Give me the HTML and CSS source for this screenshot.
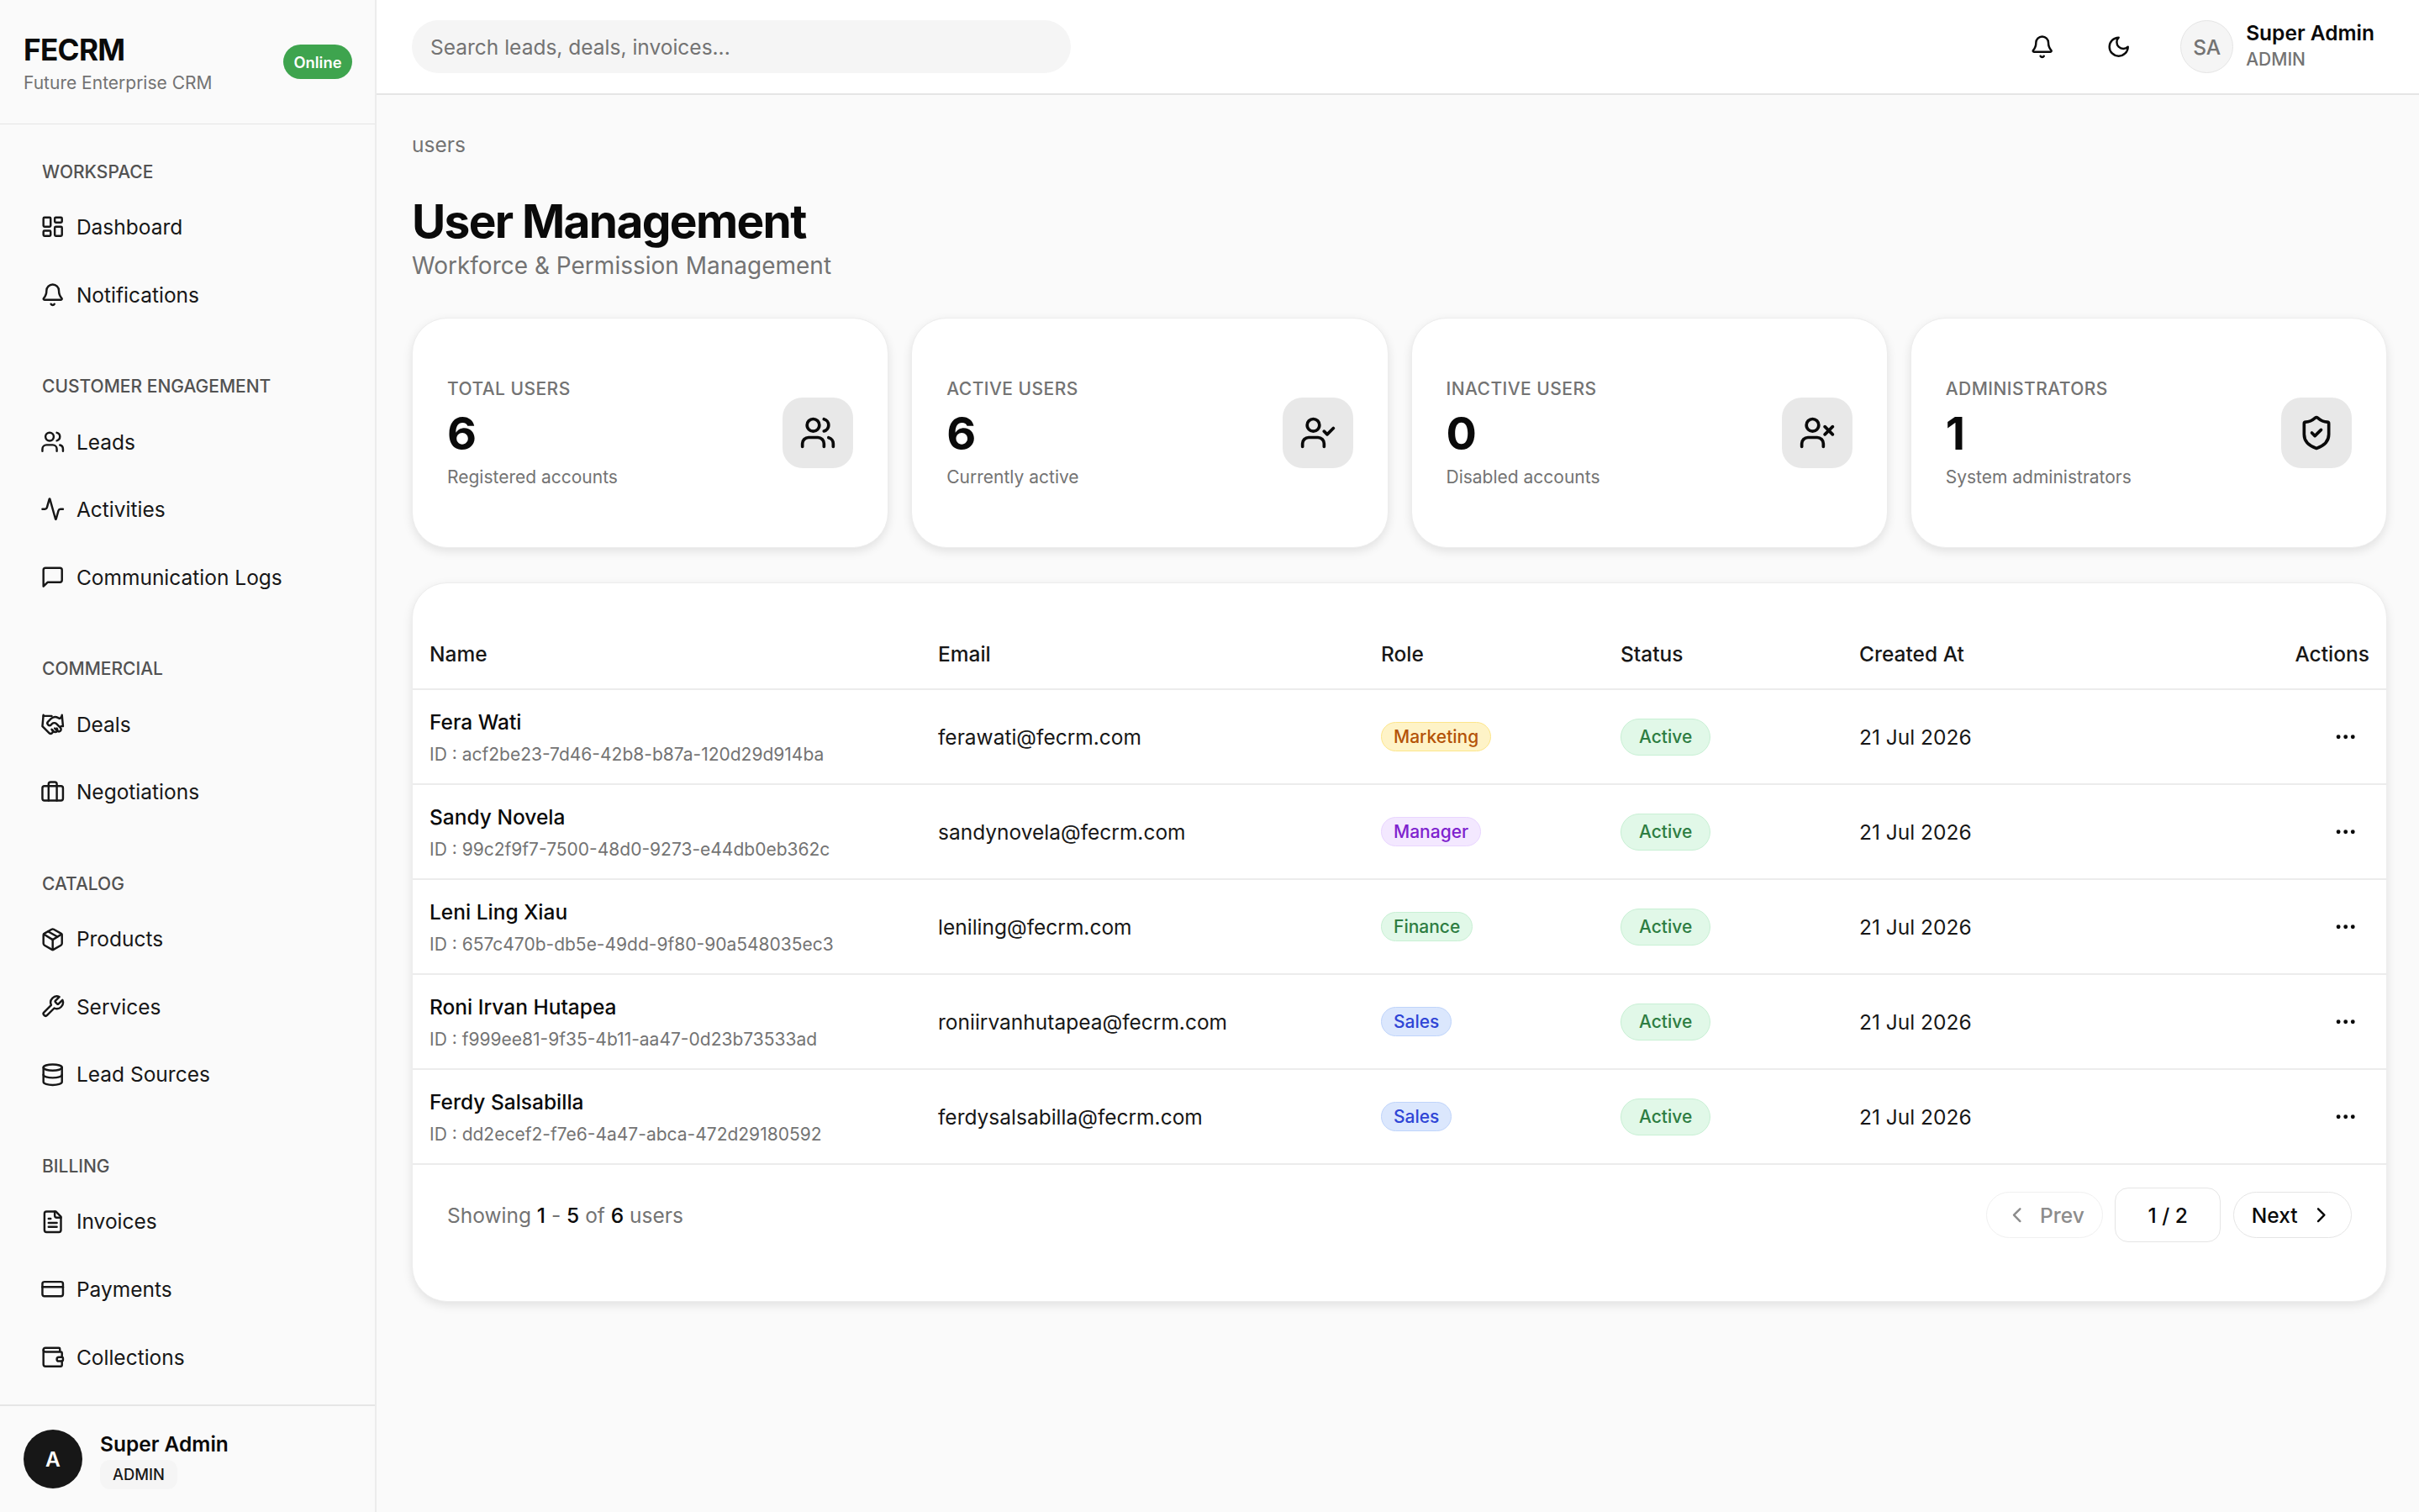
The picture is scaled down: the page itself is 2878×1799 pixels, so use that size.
FILE: index.html
```html
<!doctype html>
<html lang="en">
 <head>
  <meta charset="UTF-8">
  <meta name="viewport" content="width=device-width, initial-scale=1.0">
  <title>User Management - FECRM</title>
  <link rel="stylesheet" href="styles.css">
 </head>
 <body>
  <svg class="sprite" xmlns="http://www.w3.org/2000/svg">
   <symbol id="i-dashboard" viewBox="0 0 24 24"><rect x="3" y="3" width="7" height="9" rx="1"/><rect x="14" y="3" width="7" height="5" rx="1"/><rect x="14" y="12" width="7" height="9" rx="1"/><rect x="3" y="16" width="7" height="5" rx="1"/></symbol>
   <symbol id="i-bell" viewBox="0 0 24 24"><path d="M10.268 21a2 2 0 0 0 3.464 0"/><path d="M3.262 15.326A1 1 0 0 0 4 17h16a1 1 0 0 0 .74-1.673C19.41 13.956 18 12.499 18 8A6 6 0 0 0 6 8c0 4.499-1.411 5.956-2.738 7.326"/></symbol>
   <symbol id="i-users" viewBox="0 0 24 24"><path d="M16 21v-2a4 4 0 0 0-4-4H6a4 4 0 0 0-4 4v2"/><circle cx="9" cy="7" r="4"/><path d="M22 21v-2a4 4 0 0 0-3-3.87"/><path d="M16 3.13a4 4 0 0 1 0 7.75"/></symbol>
   <symbol id="i-activity" viewBox="0 0 24 24"><path d="M22 12h-2.48a2 2 0 0 0-1.93 1.46l-2.35 8.36a.25.25 0 0 1-.48 0L9.24 2.18a.25.25 0 0 0-.48 0l-2.35 8.36A2 2 0 0 1 4.49 12H2"/></symbol>
   <symbol id="i-message" viewBox="0 0 24 24"><path d="M21 15a2 2 0 0 1-2 2H7l-4 4V5a2 2 0 0 1 2-2h14a2 2 0 0 1 2 2z"/></symbol>
   <symbol id="i-handshake" viewBox="0 0 24 24"><path d="m11 17 2 2a1 1 0 1 0 3-3"/><path d="m14 16 2.5 2.5a1 1 0 1 0 3-3l-3.88-3.88a3 3 0 0 0-4.24 0l-.88.88a1 1 0 1 1-3-3l2.81-2.81a5.79 5.79 0 0 1 7.06-.87l.47.28a2 2 0 0 0 1.42.25L21 4"/><path d="m21 3 1 11h-2"/><path d="M3 3 2 14l6.5 6.5a1 1 0 1 0 3-3"/><path d="M3 4h8"/></symbol>
   <symbol id="i-briefcase" viewBox="0 0 24 24"><path d="M16 20V4a2 2 0 0 0-2-2h-4a2 2 0 0 0-2 2v16"/><rect x="2" y="6" width="20" height="14" rx="2"/></symbol>
   <symbol id="i-package" viewBox="0 0 24 24"><path d="M11 21.73a2 2 0 0 0 2 0l7-4A2 2 0 0 0 21 16V8a2 2 0 0 0-1-1.73l-7-4a2 2 0 0 0-2 0l-7 4A2 2 0 0 0 3 8v8a2 2 0 0 0 1 1.73z"/><path d="M12 22V12"/><path d="m3.3 7 7.703 4.734a2 2 0 0 0 1.994 0L20.7 7"/><path d="m7.5 4.27 9 5.15"/></symbol>
   <symbol id="i-wrench" viewBox="0 0 24 24"><path d="M14.7 6.3a1 1 0 0 0 0 1.4l1.6 1.6a1 1 0 0 0 1.4 0l3.77-3.77a6 6 0 0 1-7.94 7.94l-6.91 6.91a2.12 2.12 0 0 1-3-3l6.91-6.91a6 6 0 0 1 7.94-7.94l-3.76 3.76z"/></symbol>
   <symbol id="i-database" viewBox="0 0 24 24"><ellipse cx="12" cy="5" rx="9" ry="3"/><path d="M3 5V19A9 3 0 0 0 21 19V5"/><path d="M3 12A9 3 0 0 0 21 12"/></symbol>
   <symbol id="i-file" viewBox="0 0 24 24"><path d="M15 2H6a2 2 0 0 0-2 2v16a2 2 0 0 0 2 2h12a2 2 0 0 0 2-2V7Z"/><path d="M14 2v4a2 2 0 0 0 2 2h4"/><path d="M10 9H8"/><path d="M16 13H8"/><path d="M16 17H8"/></symbol>
   <symbol id="i-card" viewBox="0 0 24 24"><rect x="2" y="5" width="20" height="14" rx="2"/><path d="M2 10h20"/></symbol>
   <symbol id="i-wallet" viewBox="0 0 24 24"><path d="M19 7V4a1 1 0 0 0-1-1H5a2 2 0 0 0 0 4h15a1 1 0 0 1 1 1v4h-3a2 2 0 0 0 0 4h3a1 1 0 0 0 1-1v-2a1 1 0 0 0-1-1"/><path d="M3 5v14a2 2 0 0 0 2 2h15a1 1 0 0 0 1-1v-4"/></symbol>
   <symbol id="i-moon" viewBox="0 0 24 24"><path d="M12 3a6 6 0 0 0 9 9 9 9 0 1 1-9-9Z"/></symbol>
   <symbol id="i-user-check" viewBox="0 0 24 24"><path d="M16 21v-2a4 4 0 0 0-4-4H6a4 4 0 0 0-4 4v2"/><circle cx="9" cy="7" r="4"/><path d="m16 11 2 2 4-4"/></symbol>
   <symbol id="i-user-x" viewBox="0 0 24 24"><path d="M16 21v-2a4 4 0 0 0-4-4H6a4 4 0 0 0-4 4v2"/><circle cx="9" cy="7" r="4"/><path d="m17 8 5 5"/><path d="m22 8-5 5"/></symbol>
   <symbol id="i-shield" viewBox="0 0 24 24"><path d="M20 13c0 5-3.5 7.5-7.66 8.95a1 1 0 0 1-.67-.01C7.5 20.5 4 18 4 13V6a1 1 0 0 1 1-1c2 0 4.5-1.2 6.24-2.72a1.17 1.17 0 0 1 1.52 0C14.51 3.81 17 5 19 5a1 1 0 0 1 1 1z"/><path d="m9 12 2 2 4-4"/></symbol>
   <symbol id="i-dots" viewBox="0 0 24 24"><circle cx="12" cy="12" r="1"/><circle cx="19" cy="12" r="1"/><circle cx="5" cy="12" r="1"/></symbol>
   <symbol id="i-left" viewBox="0 0 24 24"><path d="m15 18-6-6 6-6"/></symbol>
   <symbol id="i-right" viewBox="0 0 24 24"><path d="m9 18 6-6-6-6"/></symbol>
  </svg>

  <div class="layout">
   <!-- Sidebar -->
   <aside class="sidebar">
    <div class="brand">
     <div>
      <div class="brand-name">FECRM</div>
      <div class="brand-sub">Future Enterprise CRM</div>
     </div>
     <span class="online">Online</span>
    </div>

    <nav class="nav">
     <div class="nav-section">
      <div class="nav-label">WORKSPACE</div>
      <a class="nav-item"><svg class="icon"><use href="#i-dashboard"/></svg>Dashboard</a>
      <a class="nav-item"><svg class="icon"><use href="#i-bell"/></svg>Notifications</a>
     </div>
     <div class="nav-section">
      <div class="nav-label">CUSTOMER ENGAGEMENT</div>
      <a class="nav-item"><svg class="icon"><use href="#i-users"/></svg>Leads</a>
      <a class="nav-item"><svg class="icon"><use href="#i-activity"/></svg>Activities</a>
      <a class="nav-item"><svg class="icon"><use href="#i-message"/></svg>Communication Logs</a>
     </div>
     <div class="nav-section">
      <div class="nav-label">COMMERCIAL</div>
      <a class="nav-item"><svg class="icon"><use href="#i-handshake"/></svg>Deals</a>
      <a class="nav-item"><svg class="icon"><use href="#i-briefcase"/></svg>Negotiations</a>
     </div>
     <div class="nav-section">
      <div class="nav-label">CATALOG</div>
      <a class="nav-item"><svg class="icon"><use href="#i-package"/></svg>Products</a>
      <a class="nav-item"><svg class="icon"><use href="#i-wrench"/></svg>Services</a>
      <a class="nav-item"><svg class="icon"><use href="#i-database"/></svg>Lead Sources</a>
     </div>
     <div class="nav-section">
      <div class="nav-label">BILLING</div>
      <a class="nav-item"><svg class="icon"><use href="#i-file"/></svg>Invoices</a>
      <a class="nav-item"><svg class="icon"><use href="#i-card"/></svg>Payments</a>
      <a class="nav-item"><svg class="icon"><use href="#i-wallet"/></svg>Collections</a>
     </div>
    </nav>

    <div class="side-user">
     <div class="side-avatar">A</div>
     <div>
      <div class="side-name">Super Admin</div>
      <span class="side-role">ADMIN</span>
     </div>
    </div>
   </aside>

   <div class="main">
    <!-- Top bar -->
    <header class="topbar">
     <input class="search" type="text" placeholder="Search leads, deals, invoices...">
     <div class="top-right">
      <button class="top-btn"><svg class="icon"><use href="#i-bell"/></svg></button>
      <button class="top-btn"><svg class="icon"><use href="#i-moon"/></svg></button>
      <div class="top-user">
       <div class="top-avatar">SA</div>
       <div>
        <div class="top-name">Super Admin</div>
        <div class="top-role">ADMIN</div>
       </div>
      </div>
     </div>
    </header>

    <main class="content">
     <div class="crumb">users</div>
     <h1>User Management</h1>
     <p class="subtitle">Workforce &amp; Permission Management</p>

     <div class="stats">
      <div class="stat">
       <div>
        <div class="stat-label">TOTAL USERS</div>
        <div class="stat-value">6</div>
        <div class="stat-note">Registered accounts</div>
       </div>
       <div class="stat-icon"><svg class="icon"><use href="#i-users"/></svg></div>
      </div>
      <div class="stat">
       <div>
        <div class="stat-label">ACTIVE USERS</div>
        <div class="stat-value">6</div>
        <div class="stat-note">Currently active</div>
       </div>
       <div class="stat-icon"><svg class="icon"><use href="#i-user-check"/></svg></div>
      </div>
      <div class="stat">
       <div>
        <div class="stat-label">INACTIVE USERS</div>
        <div class="stat-value">0</div>
        <div class="stat-note">Disabled accounts</div>
       </div>
       <div class="stat-icon"><svg class="icon"><use href="#i-user-x"/></svg></div>
      </div>
      <div class="stat">
       <div>
        <div class="stat-label">ADMINISTRATORS</div>
        <div class="stat-value">1</div>
        <div class="stat-note">System administrators</div>
       </div>
       <div class="stat-icon"><svg class="icon"><use href="#i-shield"/></svg></div>
      </div>
     </div>

     <section class="table-card">
      <table>
       <thead>
        <tr>
         <th class="col-name">Name</th>
         <th class="col-email">Email</th>
         <th class="col-role">Role</th>
         <th class="col-status">Status</th>
         <th class="col-date">Created At</th>
         <th class="col-actions">Actions</th>
        </tr>
       </thead>
       <tbody>
        <tr>
         <td><div class="user-name">Fera Wati</div><div class="user-id">ID : acf2be23-7d46-42b8-b87a-120d29d914ba</div></td>
         <td>ferawati@fecrm.com</td>
         <td><span class="role role-marketing">Marketing</span></td>
         <td><span class="status">Active</span></td>
         <td>21 Jul 2026</td>
         <td class="col-actions"><svg class="icon dots"><use href="#i-dots"/></svg></td>
        </tr>
        <tr>
         <td><div class="user-name">Sandy Novela</div><div class="user-id">ID : 99c2f9f7-7500-48d0-9273-e44db0eb362c</div></td>
         <td>sandynovela@fecrm.com</td>
         <td><span class="role role-manager">Manager</span></td>
         <td><span class="status">Active</span></td>
         <td>21 Jul 2026</td>
         <td class="col-actions"><svg class="icon dots"><use href="#i-dots"/></svg></td>
        </tr>
        <tr>
         <td><div class="user-name">Leni Ling Xiau</div><div class="user-id">ID : 657c470b-db5e-49dd-9f80-90a548035ec3</div></td>
         <td>leniling@fecrm.com</td>
         <td><span class="role role-finance">Finance</span></td>
         <td><span class="status">Active</span></td>
         <td>21 Jul 2026</td>
         <td class="col-actions"><svg class="icon dots"><use href="#i-dots"/></svg></td>
        </tr>
        <tr>
         <td><div class="user-name">Roni Irvan Hutapea</div><div class="user-id">ID : f999ee81-9f35-4b11-aa47-0d23b73533ad</div></td>
         <td>roniirvanhutapea@fecrm.com</td>
         <td><span class="role role-sales">Sales</span></td>
         <td><span class="status">Active</span></td>
         <td>21 Jul 2026</td>
         <td class="col-actions"><svg class="icon dots"><use href="#i-dots"/></svg></td>
        </tr>
        <tr>
         <td><div class="user-name">Ferdy Salsabilla</div><div class="user-id">ID : dd2ecef2-f7e6-4a47-abca-472d29180592</div></td>
         <td>ferdysalsabilla@fecrm.com</td>
         <td><span class="role role-sales">Sales</span></td>
         <td><span class="status">Active</span></td>
         <td>21 Jul 2026</td>
         <td class="col-actions"><svg class="icon dots"><use href="#i-dots"/></svg></td>
        </tr>
       </tbody>
      </table>

      <div class="table-foot">
       <div class="showing">Showing <b>1</b> - <b>5</b> of <b>6</b> users</div>
       <div class="pager">
        <button class="page-btn disabled"><svg class="icon"><use href="#i-left"/></svg>Prev</button>
        <span class="page-now">1 / 2</span>
        <button class="page-btn">Next<svg class="icon"><use href="#i-right"/></svg></button>
       </div>
      </div>
     </section>
    </main>
   </div>
  </div>
 </body>
</html>
```

FILE: styles.css
```css
* {
  margin: 0;
  padding: 0;
  box-sizing: border-box;
  font-family: 'Inter', 'Liberation Sans', sans-serif;
}

body {
  background: #fafafa;
  color: #0a0a0a;
  height: 100vh;
  overflow: hidden;
}

.sprite {
  display: none;
}

.icon {
  width: 29.4px;
  height: 29.4px;
  fill: none;
  stroke: currentColor;
  stroke-width: 2;
  stroke-linecap: round;
  stroke-linejoin: round;
  flex-shrink: 0;
}

.layout {
  display: flex;
  height: 100vh;
}

/* sidebar */
.sidebar {
  width: 448px;
  flex-shrink: 0;
  display: flex;
  flex-direction: column;
  border-right: 2px solid #ececec;
  background: #fafafa;
}

.brand {
  height: 148px;
  padding: 0 27px 0 28px;
  display: flex;
  align-items: center;
  justify-content: space-between;
  border-bottom: 1px solid #e5e5e5;
}

.brand-name {
  font-size: 35.2px;
  font-weight: 700;
  letter-spacing: -0.02em;
  line-height: 44px;
  margin-top: 3px;
  color: #0a0a0a;
}

.brand-sub {
  font-size: 21px;
  line-height: 30px;
  margin-top: 3px;
  color: #737373;
}

.online {
  background: #3ea44e;
  color: #fff;
  font-size: 18.35px;
  font-weight: 600;
  height: 41px;
  width: 82px;
  border-radius: 21px;
  display: flex;
  align-items: center;
  justify-content: center;
}

.nav {
  flex: 1;
  padding: 39.5px 0 0 50px;
  overflow: hidden;
}

.nav-section {
  margin-bottom: 52.2px;
}

.nav-section:last-child {
  margin-bottom: 0;
}

.nav-label {
  font-size: 21px;
  line-height: 34px;
  font-weight: 500;
  color: #525252;
  margin-bottom: 8.2px;
}

.nav-item {
  display: flex;
  align-items: center;
  gap: 14px;
  height: 80.6px;
  font-size: 24.5px;
  color: #171717;
}

.nav-item .icon {
  margin-left: -2.5px;
}

.side-user {
  border-top: 2px solid #e5e5e5;
  padding: 28px;
  height: 128px;
  display: flex;
  align-items: center;
  gap: 21px;
}

.side-avatar {
  width: 70px;
  height: 70px;
  border-radius: 50%;
  background: #171717;
  color: #fff;
  font-size: 24.5px;
  font-weight: 600;
  display: flex;
  align-items: center;
  justify-content: center;
}

.side-name {
  font-size: 24.5px;
  font-weight: 600;
  line-height: 34px;
}

.side-role {
  display: inline-block;
  background: #f5f5f5;
  border-radius: 12px;
  padding: 0 15px;
  margin-top: 2px;
  font-size: 18.35px;
  font-weight: 500;
  line-height: 35px;
  color: #171717;
}

/* top bar */
.main {
  flex: 1;
  min-width: 0;
  display: flex;
  flex-direction: column;
}

.topbar {
  height: 113px;
  flex-shrink: 0;
  background: #fff;
  border-bottom: 2px solid #e5e5e5;
  display: flex;
  align-items: center;
  justify-content: space-between;
  padding: 0 53px 0 42px;
}

.search {
  width: 784px;
  height: 63px;
  border: 0;
  border-radius: 32px;
  background: #f5f5f5;
  padding: 0 22px;
  font-size: 24.5px;
  color: #171717;
  outline: none;
}

.search::placeholder {
  color: #737373;
}

.top-right {
  display: flex;
  align-items: center;
  gap: 28px;
}

.top-btn {
  width: 63px;
  height: 63px;
  border: 0;
  background: transparent;
  color: #0a0a0a;
  display: flex;
  align-items: center;
  justify-content: center;
}

.top-user {
  display: flex;
  align-items: center;
  gap: 15px;
  margin-left: 14px;
}

.top-avatar {
  width: 63px;
  height: 63px;
  border-radius: 50%;
  background: #f5f5f5;
  border: 1px solid #e5e5e5;
  color: #737373;
  font-size: 24.5px;
  font-weight: 500;
  display: flex;
  align-items: center;
  justify-content: center;
}

.top-name {
  font-size: 24.5px;
  font-weight: 600;
  line-height: 32px;
  margin-top: -3px;
}

.top-role {
  font-size: 21px;
  font-weight: 500;
  line-height: 31px;
  color: #737373;
}

/* page content */
.content {
  flex: 1;
  padding: 42px 38px 0 42px;
  overflow: hidden;
}

.crumb {
  font-size: 24.5px;
  line-height: 34px;
  color: #737373;
}

h1 {
  font-size: 55px;
  font-weight: 700;
  letter-spacing: -0.03em;
  line-height: 68px;
  margin-top: 40px;
}

.subtitle {
  font-size: 28px;
  line-height: 36px;
  margin-top: 1px;
  color: #737373;
  margin-bottom: 44px;
}

.stats {
  display: grid;
  grid-template-columns: repeat(4, 1fr);
  gap: 27px;
  margin-bottom: 41px;
}

.stat {
  height: 274px;
  background: #fff;
  border: 1px solid #ededed;
  border-radius: 42px;
  box-shadow: 0 4px 12px rgba(0, 0, 0, 0.1);
  padding: 0 41px;
  display: flex;
  align-items: center;
  justify-content: space-between;
}

.stat-label {
  font-size: 21px;
  font-weight: 500;
  letter-spacing: 0.45px;
  line-height: 30px;
  color: #737373;
}

.stat-value {
  font-size: 54px;
  font-weight: 700;
  line-height: 66px;
  margin: 5px 0 4px;
}

.stat-note {
  font-size: 21px;
  line-height: 30px;
  color: #737373;
}

.stat-icon {
  width: 84px;
  height: 84px;
  border-radius: 24px;
  background: #e8e8e8;
  display: flex;
  align-items: center;
  justify-content: center;
}

.stat-icon .icon {
  width: 44px;
  height: 44px;
}

/* table */
.table-card {
  height: 856px;
  background: #fff;
  border: 1px solid #ededed;
  border-radius: 42px;
  box-shadow: 0 4px 12px rgba(0, 0, 0, 0.1);
  overflow: hidden;
}

table {
  width: 100%;
  border-collapse: collapse;
  table-layout: fixed;
}

th {
  height: 126px;
  padding: 42px 20px 0;
  text-align: left;
  font-size: 24.5px;
  font-weight: 500;
  color: #171717;
  border-bottom: 2px solid #ececec;
}

td {
  height: 113px;
  padding: 0 20px;
  font-size: 24.5px;
  color: #171717;
  border-bottom: 2px solid #ececec;
}

.col-name { width: 605px; }
.col-email { width: 527px; }
.col-role { width: 285px; }
.col-status { width: 284px; }

th.col-actions,
td.col-actions {
  text-align: right;
  padding-right: 20px;
}

.user-name {
  font-size: 24.5px;
  font-weight: 500;
  line-height: 34px;
  margin-top: 2px;
  color: #0a0a0a;
}

.user-id {
  font-size: 21px;
  line-height: 30px;
  margin-top: 7px;
  color: #737373;
}

.role {
  display: inline-block;
  height: 35px;
  line-height: 33px;
  padding: 0 14px;
  font-size: 21px;
  font-weight: 500;
  border-radius: 18px;
  border: 1px solid;
  vertical-align: middle;
}

.role-marketing { background: #fef3c7; border-color: #fde68a; color: #b45309; }
.role-manager { background: #f3e8ff; border-color: #e9d5ff; color: #7e22ce; }
.role-finance { background: #e1f8e8; border-color: #c8f0d4; color: #2e7d42; }
.role-sales { background: #dbe7fd; border-color: #bfd4fb; color: #2f45d6; }

.status {
  display: inline-block;
  height: 44px;
  line-height: 42px;
  padding: 0 21px;
  font-size: 21px;
  font-weight: 500;
  border-radius: 22px;
  background: #e1f8e8;
  border: 1px solid #c8f0d4;
  color: #2e7d42;
  vertical-align: middle;
}

.dots {
  display: block;
  margin-left: auto;
  margin-right: 14px;
  color: #0a0a0a;
}

.table-foot {
  display: flex;
  align-items: center;
  justify-content: space-between;
  padding: 27px 41px 0 41px;
}

.showing {
  font-size: 24.5px;
  color: #737373;
}

.showing b {
  font-weight: 500;
  color: #0a0a0a;
}

.pager {
  display: flex;
  align-items: center;
  gap: 14.5px;
}

.page-btn {
  height: 55px;
  padding: 0 21px;
  border: 1px solid #e5e5e5;
  border-radius: 28px;
  background: #fff;
  color: #0a0a0a;
  font-size: 24.5px;
  font-weight: 500;
  display: flex;
  align-items: center;
  gap: 13px;
}

.page-btn.disabled {
  color: #8c8c8c;
  border-color: #f0f0f0;
}

.page-now {
  width: 126px;
  height: 65px;
  border: 1px solid #e5e5e5;
  border-radius: 16px;
  font-size: 24.5px;
  font-weight: 500;
  display: flex;
  align-items: center;
  justify-content: center;
}
```
